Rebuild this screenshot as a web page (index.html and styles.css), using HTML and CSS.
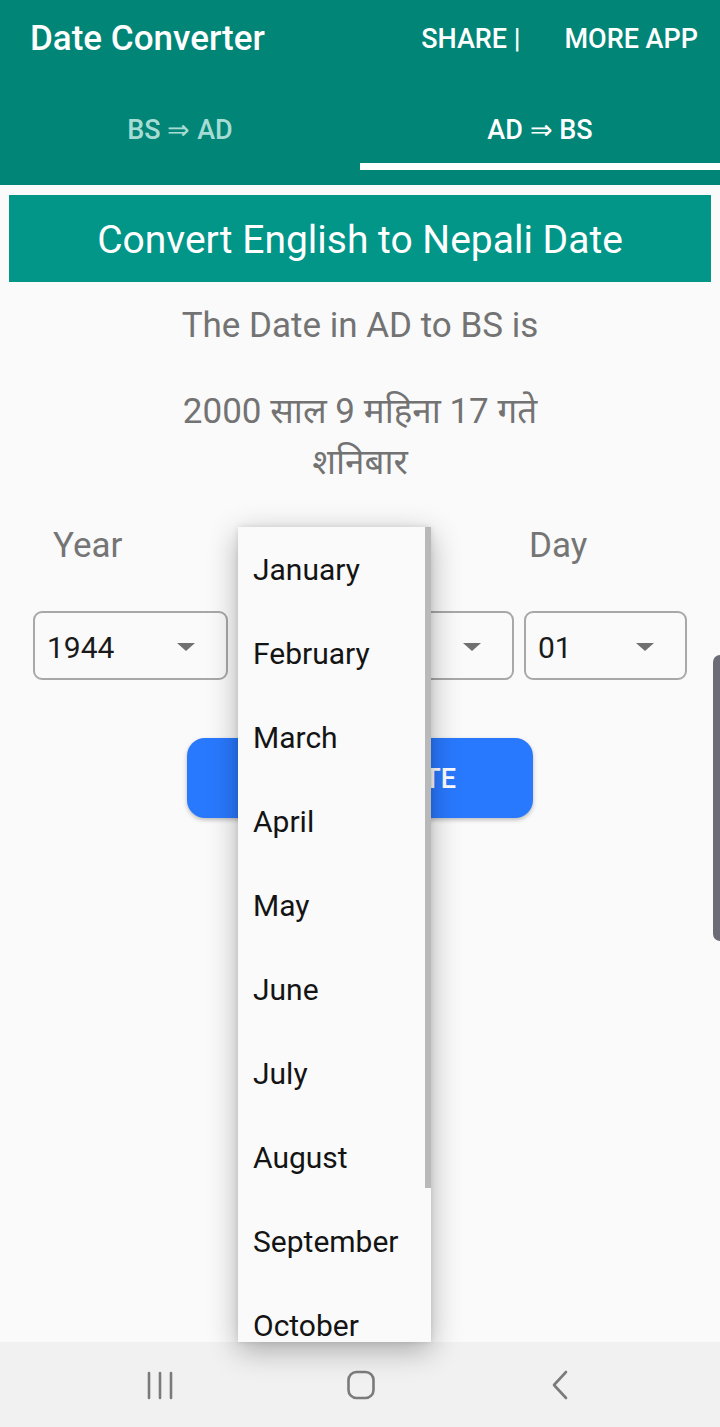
FILE: index.html
```html
<!DOCTYPE html>
<html lang="en">
<head>
<meta charset="utf-8">
<title>Date Converter</title>
<link rel="stylesheet" href="styles.css">
</head>
<body>
<div class="screen">
  <header class="appbar">
    <div class="toolbar">
      <h1 class="title">Date Converter</h1>
      <div class="actions"><span>SHARE |</span><span>MORE APP</span></div>
    </div>
    <nav class="tabs">
      <div class="tab"><span class="tab-label">BS ⇒ AD</span><span class="indicator"></span></div>
      <div class="tab active"><span class="tab-label">AD ⇒ BS</span><span class="indicator"></span></div>
    </nav>
  </header>
  <main class="content">
    <div class="banner">Convert English to Nepali Date</div>
    <p class="result-head">The Date in AD to BS is</p>
    <p class="result">2000 साल 9 महिना 17 गते<br>शनिबार</p>
    <div class="pickers">
      <div class="field">
        <span class="label year-label">Year</span>
        <div class="spinner"><span class="value">1944</span><span class="caret"></span></div>
      </div>
      <div class="field">
        <span class="label month-label"></span>
        <div class="spinner"><span class="value"></span><span class="caret"></span></div>
      </div>
      <div class="field">
        <span class="label day-label">Day</span>
        <div class="spinner"><span class="value">01</span><span class="caret"></span></div>
      </div>
    </div>
    <div class="btn-row"><button class="convert">CONVERT DATE</button></div>
  </main>
  <div class="popup">
    <ul class="menu">
      <li>January</li><li>February</li><li>March</li><li>April</li><li>May</li><li>June</li><li>July</li><li>August</li><li>September</li><li>October</li>
    </ul>
    <span class="scrollbar"></span>
  </div>
  <footer class="navbar">
    <svg class="nav-icon" width="30" height="30" viewBox="0 0 30 30"><path d="M3 3v25M14 3v25M25 3v25" stroke="#7b7b7b" stroke-width="2.6" stroke-linecap="round" fill="none"/></svg>
    <svg class="nav-icon" width="30" height="30" viewBox="0 0 30 30"><rect x="2.5" y="2" width="25" height="26" rx="8" stroke="#7b7b7b" stroke-width="2.6" fill="none"/></svg>
    <svg class="nav-icon" width="30" height="30" viewBox="0 0 30 30"><path d="M21 2L9 15l12 13" stroke="#7b7b7b" stroke-width="2.6" stroke-linecap="round" stroke-linejoin="round" fill="none"/></svg>
  </footer>
  <div class="edge"></div>
</div>
</body>
</html>
```

FILE: styles.css
```css
* { box-sizing: border-box; }
html, body { margin: 0; padding: 0; }
body {
  font-family: Roboto, "Noto Sans", "Noto Sans Devanagari", "Lohit Devanagari", sans-serif;
  background: #fafafa;
}
.screen {
  position: relative;
  width: 720px;
  height: 1427px;
  overflow: hidden;
  display: flex;
  flex-direction: column;
  background: #fafafa;
}
.appbar {
  background: #018577;
  color: #fff;
  height: 185px;
  flex: none;
}
.toolbar {
  height: 85px;
  display: flex;
  align-items: center;
  justify-content: space-between;
  padding: 0 22px 7px 30px;
}
.title {
  margin: 0;
  font-size: 35px;
  font-weight: 500;
  line-height: 40px;
}
.actions {
  display: flex;
  gap: 44px;
  font-size: 27px;
  line-height: 32px;
  font-weight: 500;
}
.tabs {
  display: flex;
  height: 100px;
}
.tab {
  flex: 1;
  display: flex;
  flex-direction: column;
  align-items: center;
  padding-top: 30px;
  font-size: 27px;
  font-weight: 500;
  color: #a6dcd3;
}
.tab-label {
  line-height: 30px;
  height: 30px;
}
.indicator {
  align-self: stretch;
  height: 7px;
  margin-top: 18px;
}
.tab.active { color: #fff; }
.tab.active .indicator { background: #fff; }

.content {
  flex: 1;
  display: flex;
  flex-direction: column;
}
.banner {
  margin: 10px 9px 0;
  height: 87px;
  background: #019688;
  color: #fff;
  font-size: 39px;
  line-height: 90px;
  text-align: center;
}
.result-head {
  margin: 24px 0 0;
  font-size: 35px;
  line-height: 40px;
  color: #737373;
  text-align: center;
}
.result {
  margin: 40px 0 0;
  font-size: 35px;
  line-height: 51px;
  color: #737373;
  text-align: center;
}
.pickers {
  display: grid;
  grid-template-columns: 195px 276px 163px;
  column-gap: 10px;
  margin: 38px 0 0 33px;
}
.field {
  display: flex;
  flex-direction: column;
}
.label {
  font-size: 35px;
  line-height: 40px;
  height: 40px;
  color: #757575;
}
.year-label { padding-left: 20px; }
.month-label { padding-left: 30px; }
.day-label { padding-left: 5px; }
.spinner {
  margin-top: 45px;
  height: 69px;
  border: 2px solid #a8a8a8;
  border-radius: 9px;
  display: flex;
  align-items: center;
  justify-content: space-between;
  padding: 3px 31px 0 12px;
  background: #fafafa;
}
.value {
  font-size: 30px;
  color: #1a1a1a;
}
.caret {
  width: 0;
  height: 0;
  border-left: 9px solid transparent;
  border-right: 9px solid transparent;
  border-top: 8px solid #707070;
}
.btn-row {
  display: flex;
  justify-content: center;
  margin-top: 58px;
}
.convert {
  width: 346px;
  height: 80px;
  border: none;
  border-radius: 18px;
  background: #2979ff;
  color: #fff;
  font-family: Roboto, sans-serif;
  font-size: 27px;
  font-weight: 500;
  padding-top: 3px;
  box-shadow: 0 2px 4px rgba(0,0,0,0.25);
}

.popup {
  position: absolute;
  left: 238px;
  top: 527px;
  width: 193px;
  height: 815px;
  background: #fafafa;
  box-shadow: 0 8px 28px rgba(0,0,0,0.30), 0 0 6px rgba(0,0,0,0.10);
  overflow: hidden;
  z-index: 5;
}
.menu {
  list-style: none;
  margin: 0;
  padding: 1px 0 0;
}
.menu li {
  height: 84px;
  line-height: 84px;
  padding-left: 15px;
  font-size: 30px;
  color: #141414;
}
.scrollbar {
  position: absolute;
  top: 0;
  right: 0;
  width: 6px;
  height: 661px;
  background: #b9b9b9;
}
.navbar {
  flex: none;
  height: 85px;
  background: #f1f1f1;
  display: flex;
  align-items: center;
  justify-content: space-between;
  padding: 0 145px 0 146px;
}
.nav-icon { display: block; }
.edge {
  position: absolute;
  right: 0;
  top: 655px;
  width: 7px;
  height: 286px;
  background: #6c6c76;
  border-radius: 7px 0 0 7px;
}
```
